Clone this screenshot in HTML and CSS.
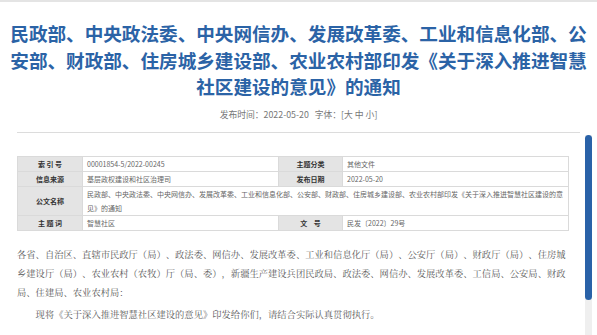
FILE: index.html
```html
<!DOCTYPE html>
<html lang="zh-CN">
<head>
  <meta charset="UTF-8" />
  <title>民政部等关于深入推进智慧社区建设的意见的通知</title>
  <link rel="stylesheet" href="styles.css">
</head>
<body>

  <div class="page">
    <!-- Title -->
    <h1 class="title">民政部、中央政法委、中央网信办、发展改革委、工业和信息化部、公安部、财政部、住房城乡建设部、农业农村部印发《关于深入推进智慧社区建设的意见》的通知</h1>
    <div class="meta">发布时间：2022-05-20&nbsp;&nbsp;&nbsp;字体：[大 中 小]</div>

    <div class="content">
      <hr class="divider" />

      <!-- Document info -->
      <table class="info">
        <colgroup>
          <col class="c-label" />
          <col class="c-value" />
          <col class="c-label2" />
          <col />
        </colgroup>
        <tr>
          <th>索 引 号</th>
          <td>00001854-5/2022-00245</td>
          <th>主题分类</th>
          <td>其他文件</td>
        </tr>
        <tr>
          <th>信息来源</th>
          <td>基层政权建设和社区治理司</td>
          <th>发布日期</th>
          <td>2022-05-20</td>
        </tr>
        <tr>
          <th>公文名称</th>
          <td colspan="3">民政部、中央政法委、中央网信办、发展改革委、工业和信息化部、公安部、财政部、住房城乡建设部、农业农村部印发《关于深入推进智慧社区建设的意见》的通知</td>
        </tr>
        <tr>
          <th>主 题 词</th>
          <td>智慧社区</td>
          <th>文&nbsp;&nbsp;&nbsp;&nbsp;号</th>
          <td>民发〔2022〕29号</td>
        </tr>
      </table>

      <!-- Body -->
      <div class="body-text">
        <p>各省、自治区、直辖市民政厅（局）、政法委、网信办、发展改革委、工业和信息化厅（局）、公安厅（局）、财政厅（局）、住房城乡建设厅（局）、农业农村（农牧）厅（局、委），新疆生产建设兵团民政局、政法委、网信办、发展改革委、工信局、公安局、财政局、住建局、农业农村局：</p>
        <p class="indent">现将《关于深入推进智慧社区建设的意见》印发给你们，请结合实际认真贯彻执行。</p>
      </div>
    </div>

    <!-- custom scrollbar of the article box -->
    <div class="scroll-track"><div class="scroll-thumb"></div></div>
  </div>

</body>
</html>
```

FILE: styles.css
```css
* {
  box-sizing: border-box;
  margin: 0;
  padding: 0;
}

html, body {
  overflow: hidden;
}

body {
  font-family: "Noto Sans CJK SC", "Liberation Sans", sans-serif;
  background: #fff;
  color: #555;
  text-spacing-trim: space-all;
}

.page {
  position: relative;
  height: 335px;
  border-top: 2px solid #e4e4e4;
}

/* Title */
.title {
  padding: 18px 10px 0;
  font-size: 18.6px;
  line-height: 26.5px;
  font-weight: bold;
  color: #2b63a6;
  text-align: center;
}

.meta {
  margin-top: 8px;
  font-size: 8.8px;
  line-height: 14px;
  color: #777;
  text-align: center;
}

/* Content column */
.content {
  padding: 0 17px;
}

.divider {
  margin-top: 10px;
  border: none;
  border-top: 1px solid #dcdcdc;
}

/* Info table */
.info {
  width: 98%;
  margin-top: 23px;
  border-collapse: collapse;
  table-layout: fixed;
  font-size: 7px;
}

.c-label {
  width: 65px;
}

.c-value {
  width: 196px;
}

.c-label2 {
  width: 64px;
}

.info th,
.info td {
  border: 1px solid #dadada;
  line-height: 14px;
  vertical-align: middle;
}

.info th {
  background: #e4e4e4;
  color: #333;
  font-weight: bold;
  text-align: center;
}

.info td {
  padding: 0 4px;
  color: #666;
  text-align: left;
}

/* Body text */
.body-text {
  width: 98%;
  margin-top: 14px;
  font-family: "Noto Serif CJK SC", "Noto Sans CJK SC", serif;
  font-size: 9.3px;
  line-height: 19px;
  color: #5a5a5a;
}

.body-text p {
  margin-bottom: 3px;
}

.body-text .indent {
  text-indent: 2em;
}

/* Scrollbar drawn over the right edge */
.scroll-track {
  position: absolute;
  left: 585px;
  top: 133px;
  bottom: 0;
  width: 7px;
  background: #efefef;
}

.scroll-thumb {
  height: 165px;
  background: #2a62a8;
  border-radius: 4px;
}
```
